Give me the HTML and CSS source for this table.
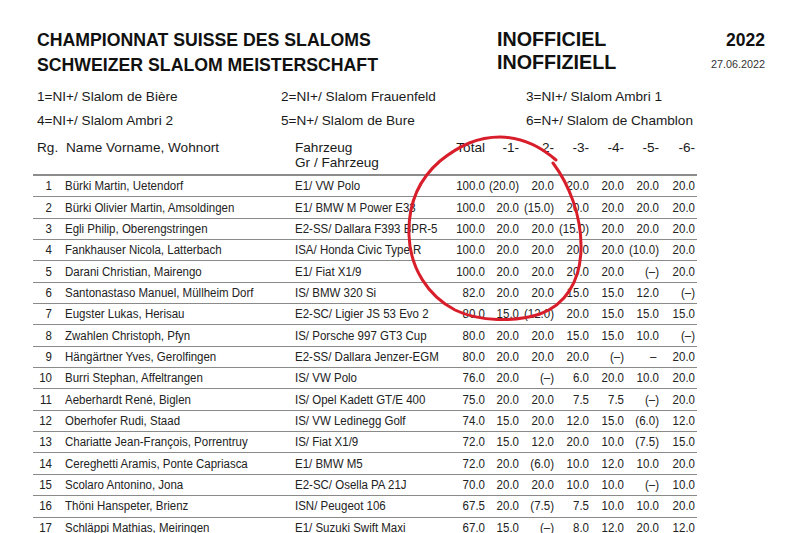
FILE: index.html
```html
<!DOCTYPE html>
<html lang="de">
<head>
<meta charset="utf-8">
<title>Championnat Suisse des Slaloms</title>
<link rel="stylesheet" href="styles.css">
</head>
<body>
<div class="page">
  <div class="top">
    <div class="titles">
      <div>CHAMPIONNAT SUISSE DES SLALOMS</div>
      <div>SCHWEIZER SLALOM MEISTERSCHAFT</div>
    </div>
    <div class="inoff">
      <div>INOFFICIEL</div>
      <div>INOFFIZIELL</div>
    </div>
    <div class="year">
      <div class="y">2022</div>
      <div class="d">27.06.2022</div>
    </div>
  </div>
  <div class="legend">
    <span>1=NI+/ Slalom de Bière</span><span>2=NI+/ Slalom Frauenfeld</span><span>3=NI+/ Slalom Ambri 1</span>
    <span>4=NI+/ Slalom Ambri 2</span><span>5=N+/ Slalom de Bure</span><span>6=N+/ Slalom de Chamblon</span>
  </div>
  <div class="head">
    <div class="rg">Rg.</div>
    <div class="nm">Name Vorname, Wohnort</div>
    <div class="veh">Fahrzeug<br>Gr / Fahrzeug</div>
    <div class="n">Total</div><div class="n">-1-</div><div class="n">-2-</div><div class="n">-3-</div><div class="n">-4-</div><div class="n">-5-</div><div class="n">-6-</div><div></div>
  </div>
  <div class="rows">
    <div class="row"><div class="r">1</div><div class="nm">Bürki Martin, Uetendorf</div><div class="veh">E1/ VW Polo</div><div class="n">100.0</div><div class="n">(20.0)</div><div class="n">20.0</div><div class="n">20.0</div><div class="n">20.0</div><div class="n">20.0</div><div class="n">20.0</div><div></div></div>
    <div class="row"><div class="r">2</div><div class="nm">Bürki Olivier Martin, Amsoldingen</div><div class="veh">E1/ BMW M Power E33</div><div class="n">100.0</div><div class="n">20.0</div><div class="n">(15.0)</div><div class="n">20.0</div><div class="n">20.0</div><div class="n">20.0</div><div class="n">20.0</div><div></div></div>
    <div class="row"><div class="r">3</div><div class="nm">Egli Philip, Oberengstringen</div><div class="veh">E2-SS/ Dallara F393 BPR-5</div><div class="n">100.0</div><div class="n">20.0</div><div class="n">20.0</div><div class="n">(15.0)</div><div class="n">20.0</div><div class="n">20.0</div><div class="n">20.0</div><div></div></div>
    <div class="row"><div class="r">4</div><div class="nm">Fankhauser Nicola, Latterbach</div><div class="veh">ISA/ Honda Civic Type R</div><div class="n">100.0</div><div class="n">20.0</div><div class="n">20.0</div><div class="n">20.0</div><div class="n">20.0</div><div class="n">(10.0)</div><div class="n">20.0</div><div></div></div>
    <div class="row"><div class="r">5</div><div class="nm">Darani Christian, Mairengo</div><div class="veh">E1/ Fiat X1/9</div><div class="n">100.0</div><div class="n">20.0</div><div class="n">20.0</div><div class="n">20.0</div><div class="n">20.0</div><div class="n">(–)</div><div class="n">20.0</div><div></div></div>
    <div class="row"><div class="r">6</div><div class="nm">Santonastaso Manuel, Müllheim Dorf</div><div class="veh">IS/ BMW 320 Si</div><div class="n">82.0</div><div class="n">20.0</div><div class="n">20.0</div><div class="n">15.0</div><div class="n">15.0</div><div class="n">12.0</div><div class="n">(–)</div><div></div></div>
    <div class="row"><div class="r">7</div><div class="nm">Eugster Lukas, Herisau</div><div class="veh">E2-SC/ Ligier JS 53 Evo 2</div><div class="n">80.0</div><div class="n">15.0</div><div class="n">(12.0)</div><div class="n">20.0</div><div class="n">15.0</div><div class="n">15.0</div><div class="n">15.0</div><div></div></div>
    <div class="row"><div class="r">8</div><div class="nm">Zwahlen Christoph, Pfyn</div><div class="veh">IS/ Porsche 997 GT3 Cup</div><div class="n">80.0</div><div class="n">20.0</div><div class="n">20.0</div><div class="n">15.0</div><div class="n">15.0</div><div class="n">10.0</div><div class="n">(–)</div><div></div></div>
    <div class="row"><div class="r">9</div><div class="nm">Hängärtner Yves, Gerolfingen</div><div class="veh">E2-SS/ Dallara Jenzer-EGM</div><div class="n">80.0</div><div class="n">20.0</div><div class="n">20.0</div><div class="n">20.0</div><div class="n">(–)</div><div class="n dash">–</div><div class="n">20.0</div><div></div></div>
    <div class="row"><div class="r">10</div><div class="nm">Burri Stephan, Affeltrangen</div><div class="veh">IS/ VW Polo</div><div class="n">76.0</div><div class="n">20.0</div><div class="n">(–)</div><div class="n">6.0</div><div class="n">20.0</div><div class="n">10.0</div><div class="n">20.0</div><div></div></div>
    <div class="row"><div class="r">11</div><div class="nm">Aeberhardt René, Biglen</div><div class="veh">IS/ Opel Kadett GT/E 400</div><div class="n">75.0</div><div class="n">20.0</div><div class="n">20.0</div><div class="n">7.5</div><div class="n">7.5</div><div class="n">(–)</div><div class="n">20.0</div><div></div></div>
    <div class="row"><div class="r">12</div><div class="nm">Oberhofer Rudi, Staad</div><div class="veh">IS/ VW Ledinegg Golf</div><div class="n">74.0</div><div class="n">15.0</div><div class="n">20.0</div><div class="n">12.0</div><div class="n">15.0</div><div class="n">(6.0)</div><div class="n">12.0</div><div></div></div>
    <div class="row"><div class="r">13</div><div class="nm">Chariatte Jean-François, Porrentruy</div><div class="veh">IS/ Fiat X1/9</div><div class="n">72.0</div><div class="n">15.0</div><div class="n">12.0</div><div class="n">20.0</div><div class="n">10.0</div><div class="n">(7.5)</div><div class="n">15.0</div><div></div></div>
    <div class="row"><div class="r">14</div><div class="nm">Cereghetti Aramis, Ponte Capriasca</div><div class="veh">E1/ BMW M5</div><div class="n">72.0</div><div class="n">20.0</div><div class="n">(6.0)</div><div class="n">10.0</div><div class="n">12.0</div><div class="n">10.0</div><div class="n">20.0</div><div></div></div>
    <div class="row"><div class="r">15</div><div class="nm">Scolaro Antonino, Jona</div><div class="veh">E2-SC/ Osella PA 21J</div><div class="n">70.0</div><div class="n">20.0</div><div class="n">20.0</div><div class="n">10.0</div><div class="n">10.0</div><div class="n">(–)</div><div class="n">10.0</div><div></div></div>
    <div class="row"><div class="r">16</div><div class="nm">Thöni Hanspeter, Brienz</div><div class="veh">ISN/ Peugeot 106</div><div class="n">67.5</div><div class="n">20.0</div><div class="n">(7.5)</div><div class="n">7.5</div><div class="n">10.0</div><div class="n">10.0</div><div class="n">20.0</div><div></div></div>
    <div class="row"><div class="r">17</div><div class="nm">Schläppi Mathias, Meiringen</div><div class="veh">E1/ Suzuki Swift Maxi</div><div class="n">67.0</div><div class="n">15.0</div><div class="n">(–)</div><div class="n">8.0</div><div class="n">12.0</div><div class="n">20.0</div><div class="n">12.0</div><div></div></div>
  </div>
</div>
<svg class="mark" width="800" height="533" viewBox="0 0 800 533" aria-hidden="true">
  <path d="M 553 163 C 568 183, 582 215, 581 250 C 580 282, 565 305, 540 314 C 515 322, 480 322, 455 310 C 428 296, 410 268, 409 235 C 408 205, 418 180, 440 161 C 460 145, 478 137, 500 137 C 522 137, 540 146, 556 160" fill="none" stroke="#d81e2a" stroke-width="3" stroke-linecap="round" stroke-linejoin="round"/>
</svg>
</body>
</html>
```

FILE: styles.css
```css
html, body {
  margin: 0;
  padding: 0;
  background: #ffffff;
}
body {
  width: 800px;
  height: 533px;
  overflow: hidden;
  position: relative;
  font-family: "Liberation Sans", Arial, sans-serif;
  color: #1b1b1b;
}
.page {
  padding-left: 33px;
}
.top {
  display: flex;
  width: 728px;
  padding: 28px 0 0 4px;
  height: 57px;
}
.titles {
  width: 460px;
  font-weight: bold;
  font-size: 17.7px;
  line-height: 24.5px;
  color: #111;
}
.inoff {
  font-weight: bold;
  font-size: 19.7px;
  line-height: 23px;
  color: #111;
}
.year {
  margin-left: auto;
  text-align: right;
}
.year .y {
  font-weight: bold;
  font-size: 17.5px;
  line-height: 24px;
  color: #111;
}
.year .d {
  font-size: 10.8px;
  line-height: 24px;
  color: #333;
}
.legend {
  display: grid;
  grid-template-columns: 244px 245px 240px;
  padding-left: 4px;
  font-size: 13.6px;
  line-height: 24px;
  white-space: nowrap;
}
.head {
  display: grid;
  grid-template-columns: 19px 243px 160px 30px 34px 35px 35px 35px 35px 36px 2px;
  width: 664px;
  padding-top: 7px;
  padding-bottom: 4px;
  border-bottom: 2px solid #8c8c8c;
  font-size: 13.6px;
  line-height: 15px;
  white-space: nowrap;
}
.head .rg {
  padding-left: 4px;
}
.head .nm {
  padding-left: 14px;
}
.head .n {
  display: flex;
  justify-content: flex-end;
}
.rows {
  width: 664px;
}
.row {
  display: grid;
  grid-template-columns: 19px 243px 160px 30px 34px 35px 35px 35px 35px 36px 2px;
  box-sizing: border-box;
  height: 21.35px;
  align-items: center;
  border-bottom: 1.4px solid #8a8a8a;
  font-size: 13.7px;
  line-height: 16px;
  color: #222;
  white-space: nowrap;
}
.row > div {
  transform: scaleX(0.84);
}
.row .r {
  text-align: right;
  transform-origin: right center;
}
.row .nm {
  padding-left: 13px;
  transform-origin: 13px center;
}
.row .veh {
  transform-origin: left center;
}
.row .n {
  display: flex;
  justify-content: flex-end;
  transform-origin: right center;
}
.row .dash {
  padding-right: 3px;
}
.mark {
  position: absolute;
  left: 0;
  top: 0;
  pointer-events: none;
}
```
